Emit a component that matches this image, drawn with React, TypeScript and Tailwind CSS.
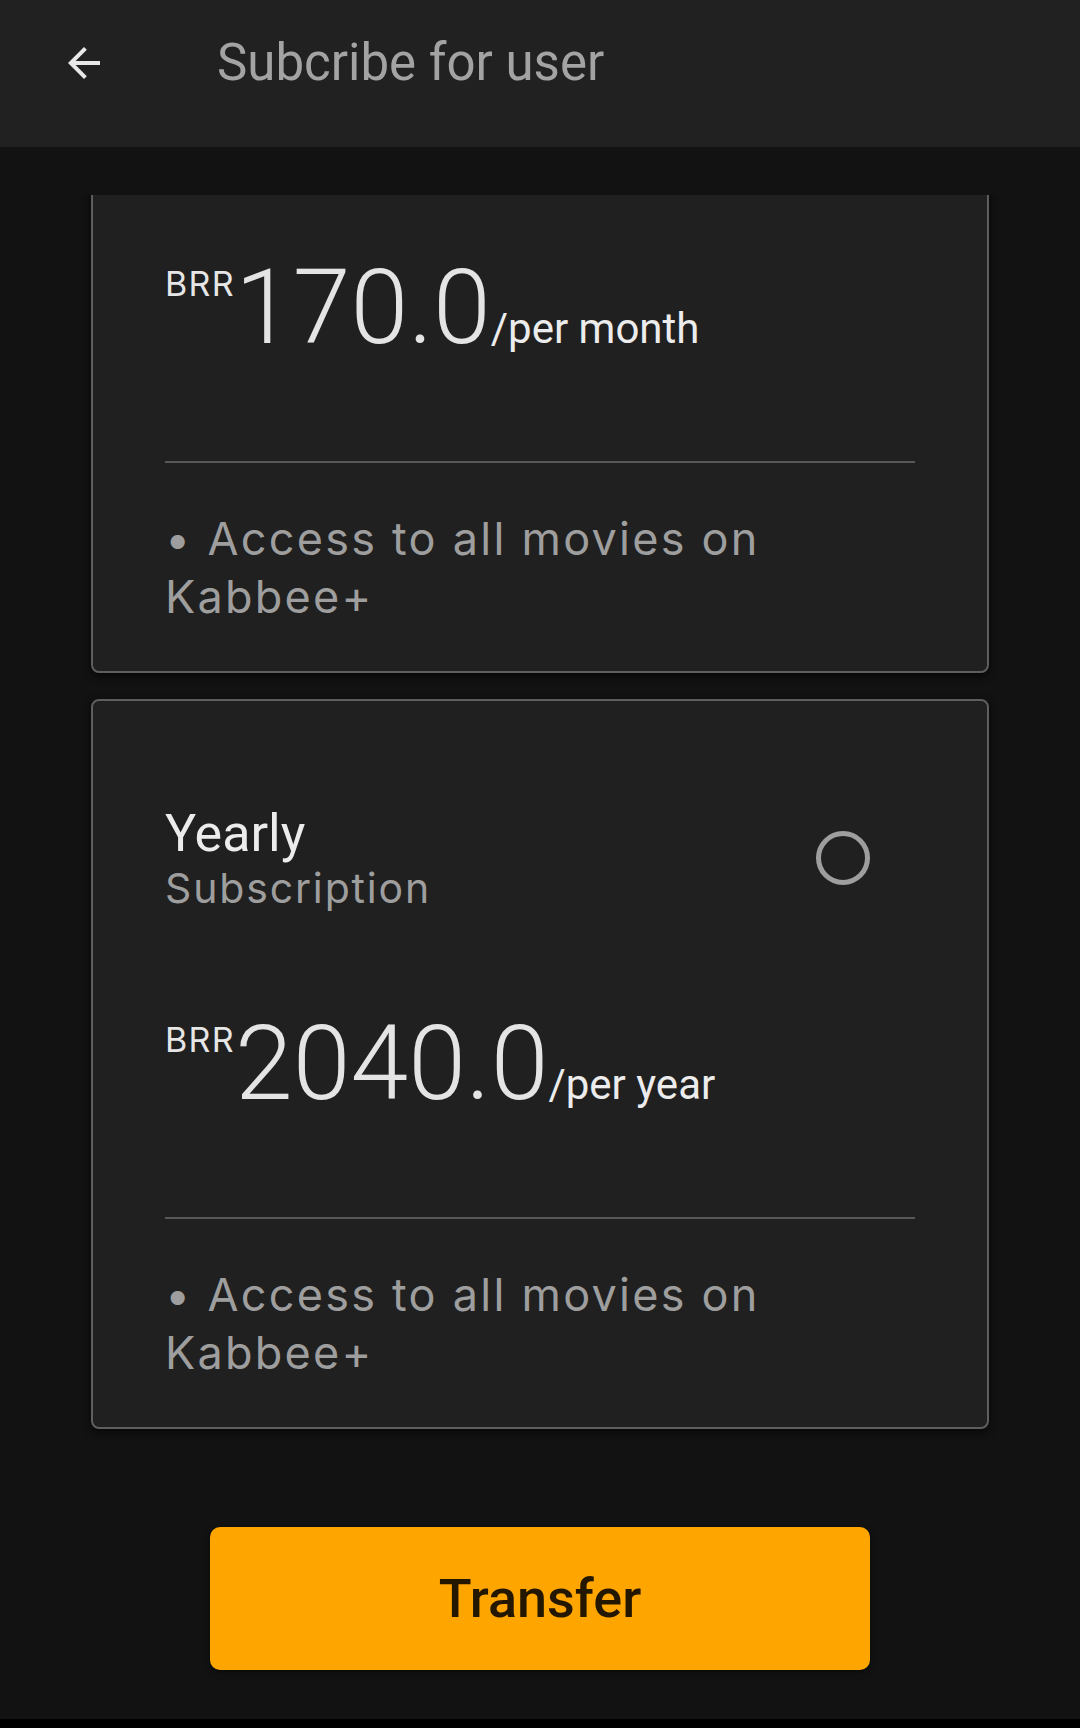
import React from 'react'

const roboto = { fontFamily: 'Roboto, "Liberation Sans", sans-serif' }
const body = { fontFamily: 'Inter, "Noto Sans", sans-serif' }

type Plan = {
  name: string
  price: string
  period: string
}

const plans: Plan[] = [
  { name: 'Monthly', price: '170.0', period: '/per month' },
  { name: 'Yearly', price: '2040.0', period: '/per year' },
]

function PlanCard({ plan }: { plan: Plan }) {
  return (
    <div className="h-[730px] rounded-[8px] border-2 border-[#5e5e5e] bg-[#202020] px-[72px] pt-[103px] pb-[45px] shadow-[0_3px_8px_rgba(0,0,0,0.7)]">
      {/* Title + radio */}
      <div className="flex items-center justify-between">
        <div>
          <div className="h-[60px] text-[52px] leading-[60px] text-[#ececec]" style={roboto}>
            {plan.name}
          </div>
          <div className="h-[48px] text-[41px] leading-[48px] tracking-[0.045em] text-[#9e9e9e]" style={body}>
            Subscription
          </div>
        </div>
        <div className="mr-[45px] h-[54px] w-[54px] rounded-full border-[5px] border-[#9e9e9e]" />
      </div>

      {/* Price */}
      <div className="mt-[100px] flex h-[104px] items-baseline">
        <span className="relative -top-[47px] text-[34px] leading-none tracking-[0.04em] text-[#e6e6e6]" style={body}>
          BRR
        </span>
        <span className="text-[104px] font-light leading-[104px] text-[#e4e4e4]" style={roboto}>
          {plan.price}
        </span>
        <span className="text-[42px] leading-none text-[#ececec]" style={roboto}>
          {plan.period}
        </span>
      </div>

      <div className="mt-[101px] h-[2px] bg-[#575757]" />

      {/* Features */}
      <p className="mt-[47px] text-[45px] leading-[58px] tracking-[0.05em] text-[#9e9e9e]" style={body}>
        • Access to all movies on Kabbee+
      </p>
    </div>
  )
}

export default function App() {
  return (
    <div className="flex h-[1728px] w-[1080px] flex-col bg-[#121212]">
      {/* Header */}
      <header className="h-[147px] shrink-0 bg-[#212121]">
        <div className="flex h-[126px] items-center">
          <svg viewBox="0 0 24 24" className="ml-[60px] h-[48px] w-[48px] fill-[#e8e8e8]">
            <path d="M20 11H7.83l5.59-5.59L12 4l-8 8 8 8 1.41-1.41L7.83 13H20v-2z" />
          </svg>
          <h1 className="ml-[109px] text-[51px] font-normal text-[#a3a3a3]" style={roboto}>
            Subcribe for user
          </h1>
        </div>
      </header>

      {/* Scrolled list of plans */}
      <main className="mt-[48px] flex-1 overflow-hidden">
        <div className="-mt-[252px] flex flex-col gap-[26px] px-[91px] pb-[20px]">
          {plans.map((plan) => (
            <PlanCard key={plan.name} plan={plan} />
          ))}
        </div>
      </main>

      {/* Footer button */}
      <div className="flex shrink-0 justify-center pt-[49px] pb-[49px]">
        <button
          className="h-[143px] w-[660px] rounded-[10px] bg-[#ffa500] text-[54px] font-medium text-[#231700] shadow-[0_2px_6px_rgba(0,0,0,0.5)]"
          style={roboto}
        >
          Transfer
        </button>
      </div>
      <div className="h-[9px] shrink-0 bg-black" />
    </div>
  )
}
